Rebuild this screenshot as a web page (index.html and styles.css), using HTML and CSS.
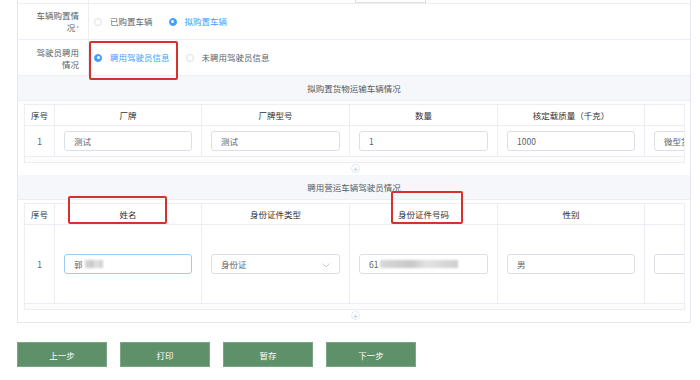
FILE: index.html
```html
<!DOCTYPE html>
<html lang="zh-CN">
<head>
<meta charset="utf-8">
<title>表单</title>
<link rel="stylesheet" href="styles.css">
</head>
<body>
<div class="page">
  <div class="panel">
    <div class="prev-row"><div class="prev-label"></div><div class="prev-box"></div></div>

    <div class="form-row">
      <div class="label"><span class="label-text required">车辆购置情况</span></div>
      <div class="field">
        <label class="radio"><span class="dot"></span><span class="rtext">已购置车辆</span></label>
        <label class="radio checked"><span class="dot"></span><span class="rtext">拟购置车辆</span></label>
      </div>
    </div>

    <div class="form-row">
      <div class="label"><span class="label-text">驾驶员聘用情况</span></div>
      <div class="field">
        <label class="radio checked"><span class="dot"></span><span class="rtext">聘用驾驶员信息</span></label>
        <label class="radio"><span class="dot"></span><span class="rtext">未聘用驾驶员信息</span></label>
      </div>
    </div>

    <div class="section-title">拟购置货物运输车辆情况</div>
    <div class="section-body">
      <div class="grid">
        <div class="trow thead">
          <div class="cell c0">序号</div>
          <div class="cell c1">厂牌</div>
          <div class="cell c2">厂牌型号</div>
          <div class="cell c3">数量</div>
          <div class="cell c4">核定载质量（千克）</div>
          <div class="cell c5"></div>
        </div>
        <div class="trow tdata">
          <div class="cell c0">1</div>
          <div class="cell c1"><div class="input">测试</div></div>
          <div class="cell c2"><div class="input">测试</div></div>
          <div class="cell c3"><div class="input">1</div></div>
          <div class="cell c4"><div class="input">1000</div></div>
          <div class="cell c5"><div class="input">微型货车</div></div>
        </div>
        <div class="scrollbar"></div>
      </div>
      <div class="add-row"><span class="add">+</span></div>
    </div>

    <div class="section-title">聘用营运车辆驾驶员情况</div>
    <div class="section-body">
      <div class="grid">
        <div class="trow thead">
          <div class="cell c0">序号</div>
          <div class="cell c1">姓名</div>
          <div class="cell c2">身份证件类型</div>
          <div class="cell c3">身份证件号码</div>
          <div class="cell c4">性别</div>
          <div class="cell c5"></div>
        </div>
        <div class="trow tdata tall">
          <div class="cell c0">1</div>
          <div class="cell c1"><div class="input focus">郭<span class="blur short"></span></div></div>
          <div class="cell c2"><div class="input select">身份证<svg class="chev" width="8" height="5" viewBox="0 0 8 5"><path d="M0.5 0.5 L4 4 L7.5 0.5" fill="none" stroke="#c0c4cc" stroke-width="0.9"/></svg></div></div>
          <div class="cell c3"><div class="input">61<span class="blur long"></span></div></div>
          <div class="cell c4"><div class="input">男</div></div>
          <div class="cell c5"><div class="input"></div></div>
        </div>
        <div class="scrollbar"></div>
      </div>
      <div class="add-row"><span class="add">+</span></div>
    </div>
  </div>

  <div class="actions">
    <button class="btn">上一步</button>
    <button class="btn">打印</button>
    <button class="btn">暂存</button>
    <button class="btn">下一步</button>
  </div>

  <div class="mark mark1"></div>
  <div class="mark mark2"></div>
  <div class="mark mark3"></div>
</div>
</body>
</html>
```

FILE: styles.css
```css
* { box-sizing: border-box; }
html, body {
  margin: 0;
  padding: 0;
  background: #ffffff;
}
body {
  font-family: "Noto Sans CJK SC", "Noto Sans", sans-serif;
  font-size: 8.5px;
  color: #606266;
}
.page {
  position: relative;
  width: 700px;
  height: 380px;
  padding-left: 17px;
}
.panel {
  width: 674px;
  border-left: 1px solid #e4e7ed;
  border-right: 1px solid #e4e7ed;
  border-bottom: 1px solid #e4e7ed;
}
.prev-row {
  display: flex;
  height: 4px;
  border-bottom: 1px solid #ebeef5;
}
.prev-label {
  width: 71px;
  border-right: 1px solid #ebeef5;
}
.prev-box {
  margin-left: 266px;
  width: 71px;
  height: 3px;
  border: 1px solid #dcdfe6;
  border-top: none;
}
.form-row {
  display: flex;
  height: 36px;
  border-bottom: 1px solid #ebeef5;
}
.label {
  width: 71px;
  flex: none;
  border-right: 1px solid #ebeef5;
  display: flex;
  align-items: center;
  justify-content: flex-end;
  padding: 0 9px 0 12px;
}
.label-text {
  display: block;
  text-align: right;
  line-height: 12px;
  color: #5a5e66;
}
.label-text.required::after {
  content: "*";
  color: #f56c6c;
  font-size: 6px;
  margin-left: 1px;
}
.field {
  display: flex;
  align-items: center;
  padding-left: 5px;
}
.radio {
  display: flex;
  align-items: center;
  margin-right: 16px;
}
.dot {
  width: 8px;
  height: 8px;
  border-radius: 50%;
  border: 1px solid #dcdfe6;
  background: #fff;
  margin-right: 8px;
  display: flex;
  align-items: center;
  justify-content: center;
}
.radio.checked .dot {
  border-color: #409eff;
  background: #409eff;
}
.radio.checked .dot::after {
  content: "";
  width: 3px;
  height: 3px;
  border-radius: 50%;
  background: #fff;
}
.rtext { line-height: 11px; }
.radio.checked .rtext { color: #409eff; }

.section-title {
  height: 25px;
  background: #f5f7fa;
  border-bottom: 1px solid #ebeef5;
  display: flex;
  align-items: center;
  justify-content: center;
  color: #555a62;
}
.section-body {
  padding: 3px 5px 0 6px;
}
.grid {
  width: 661px;
  border: 1px solid #ebeef5;
  overflow: hidden;
}
.trow {
  display: flex;
  border-bottom: 1px solid #ebeef5;
  width: 800px;
}
.thead { height: 21px; }
.tdata { height: 31px; }
.tdata.tall { height: 79px; }
.cell {
  flex: none;
  border-right: 1px solid #ebeef5;
  display: flex;
  align-items: center;
  justify-content: center;
  padding: 0 9px;
}
.thead .cell { color: #303133; }
.c0 { width: 30px; padding: 0; }
.c1 { width: 147px; }
.c2 { width: 148px; }
.c3 { width: 148px; }
.c4 { width: 147px; }
.c5 { width: 147px; }
.input {
  width: 100%;
  height: 20px;
  border: 1px solid #dcdfe6;
  border-radius: 3px;
  background: #fff;
  display: flex;
  align-items: center;
  padding-left: 9px;
  color: #606266;
  position: relative;
}
.input.focus { border-color: #9ccaf2; }
.select .chev {
  position: absolute;
  right: 9px;
  top: 8px;
}
.blur {
  display: inline-block;
  height: 8px;
  background: linear-gradient(90deg, #d8d8d8, #c8c8c8 40%, #e2e2e2 60%, #cfcfcf);
  filter: blur(0.8px);
  margin-left: 2px;
}
.blur.short { width: 18px; }
.blur.long { width: 78px; }
.scrollbar {
  height: 5px;
  background: #fcfcfd;
}
.add-row {
  height: 12px;
  display: flex;
  justify-content: center;
  align-items: flex-start;
  padding-top: 1px;
}
.add {
  width: 9px;
  height: 9px;
  border: 1px solid #e4e7ed;
  border-radius: 50%;
  color: #9cbfe6;
  font-size: 8px;
  line-height: 7px;
  text-align: center;
  margin-left: 2px;
}
.actions {
  display: flex;
  gap: 13px;
  margin-top: 19px;
}
.btn {
  width: 90px;
  height: 25px;
  background: #5e9069;
  border: 1px solid #7ba685;
  color: #ffffff;
  font-family: "Noto Sans CJK SC", "Noto Sans", sans-serif;
  font-size: 8.5px;
  padding: 0;
}
.mark {
  position: absolute;
  border: 2px solid #d9302b;
  border-radius: 2px;
}
.mark1 { left: 89px; top: 41px; width: 89px; height: 39px; }
.mark2 { left: 68px; top: 196px; width: 99px; height: 28px; }
.mark3 { left: 391px; top: 191px; width: 72px; height: 33px; }
```
